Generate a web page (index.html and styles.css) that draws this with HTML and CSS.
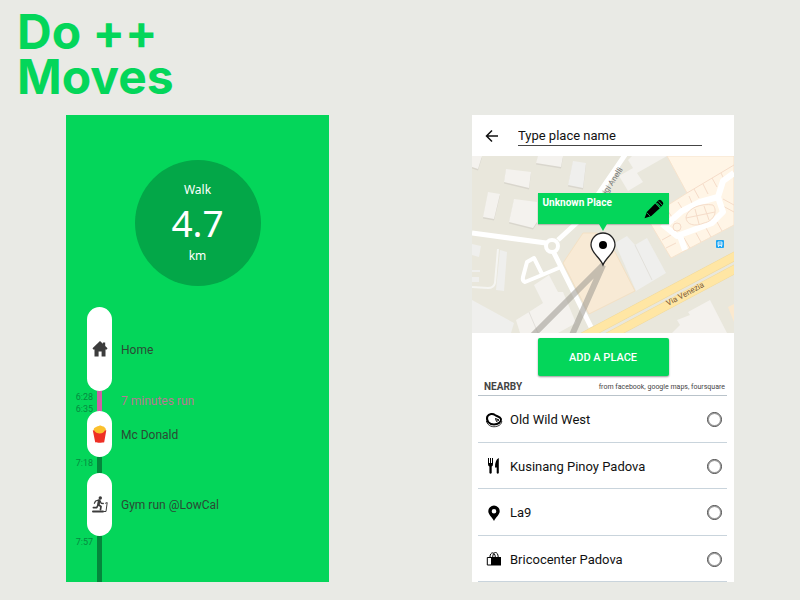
FILE: index.html
```html
<!DOCTYPE html>
<html lang="en">
<head>
    <meta charset="UTF-8">
    <meta name="viewport" content="width=device-width, initial-scale=1.0">
    <title>Do ++ Moves</title>
    <link rel="stylesheet" href="styles.css">
</head>
<body>
    <header class="title">
        <h1>Do ++<br>Moves</h1>
    </header>
    <main class="screens">
        <section class="moves">
            <div class="circle">
                <span class="unit">Walk</span>
                <span class="distance">4.7</span>
                <span class="unit">km</span>
            </div>
            <ol class="timeline">
                <li class="stop">
                    <span class="pill home">
                        <svg width="16" height="16" viewBox="0 0 16 16" fill="#3c3c3c"><path d="M8 0 0.5 7.3 1.3 8.6H2.5V15.5H6.6V10.5H9.6V15.5H13.5V8.6H14.8L15.5 7.3 13.2 5V1.4H10.9V2.8z"/></svg>
                    </span>
                    <span class="name">Home</span>
                </li>
                <li class="move run">
                    <span class="time"><time>6:28</time><time>6:35</time></span>
                    <span class="rail"></span>
                    <span class="name">7 minutes run</span>
                </li>
                <li class="stop">
                    <span class="pill food">
                        <svg width="16" height="18" viewBox="0 0 16 18"><path d="M2 6C1 3.5 2.6 2.4 4 2.2 5 .8 6.6 1.3 7.3.7 8.6.2 9.3 1.2 10.3 1.3 12 1.3 12.4 2.3 13.2 3 14.5 4.2 13.8 6 12.6 7.6 10 9.5 5 9.5 3 8z" fill="#fbc02d"/><path d="M.8 5.2 2.2 5.6C4 9.4 11.6 9.4 12.8 5.6L14.3 5.2 12.2 17.2C10 17.8 5.3 17.8 3.2 17.2z" fill="#ee2f25"/></svg>
                    </span>
                    <span class="name">Mc Donald</span>
                </li>
                <li class="move">
                    <span class="time"><time>7:18</time></span>
                    <span class="rail"></span>
                </li>
                <li class="stop">
                    <span class="pill gym">
                        <svg width="16" height="17" viewBox="0 0 16 17" fill="none" stroke="#3c3c3c" stroke-linecap="round" stroke-linejoin="round">
                            <circle cx="8.3" cy="2" r="1.7" fill="#3c3c3c" stroke="none"/>
                            <path d="M7.2 4.6 6.4 8.4" stroke-width="2.6"/>
                            <path d="M6.4 4.2 3.6 5 2.4 7.2M8.2 5.2 9.2 7.3 11.3 7.5" stroke-width="1.3"/>
                            <path d="M6.8 9 9 10.5 8.5 13.6M6 9.2 4.7 11.6 1.4 11.7" stroke-width="1.7"/>
                            <path d="M1 15.5H11" stroke-width="2"/>
                            <path d="M12 15.5H14L15.2 6.6 13.5 7.2" stroke-width="1"/>
                        </svg>
                    </span>
                    <span class="name">Gym run @LowCal</span>
                </li>
                <li class="move last">
                    <span class="time"><time>7:57</time></span>
                    <span class="rail"></span>
                </li>
            </ol>
        </section>

        <form class="places">
            <div class="topbar">
                <button type="button" class="back" aria-label="Back">
                    <svg width="14" height="14" viewBox="0 0 14 14" fill="none" stroke="#111" stroke-width="1.5"><path d="M13 7H1.8M7 1.5 1.5 7 7 12.5"/></svg>
                </button>
                <input type="text" class="place-name" name="place" value="Type place name" aria-label="Place name">
            </div>

            <div class="map">
                <svg class="map-image" viewBox="0 0 262 177" preserveAspectRatio="xMidYMid slice">
                    <rect width="262" height="177" fill="#e9e7dc"/>
                    <!-- buildings -->
                    <g fill="#d9d6cd" transform="translate(0 1.5)">
                        <path d="M0 0H10L6 13 0 11zM34 13 59 16 57 32 32 26zM66 0H91L89 11 64 7zM101 5 114 7 111 32 96 29zM16 36 28 38 22 63 11 61zM42 43 65 46V66L61 72 37 66z"/>
                    </g>
                    <g fill="#f4f2ee">
                        <path d="M0 0H10L6 13 0 11zM34 13 59 16 57 32 32 26zM66 0H91L89 11 64 7zM16 36 28 38 22 63 11 61zM42 43 65 46V66L61 72 37 66z"/>
                        <path d="M156 4 160 0H195L165 17 171 26 156 35 147 20 161 12z"/>
                        <path d="M62 129 77 119 86 136 91 136 104 167 86 177H48L44 164 57 156 71 147z"/>
                        <path d="M238 144 216 156 218 159 205 164 208 169 200 177H255z"/>
                    </g>
                    <g fill="#efefed">
                        <path d="M101 5 114 7 111 32 96 29zM28 94 35 96 32 135 24 134zM0 144 42 167 39 177H0zM0 88 9 90 7 101 0 99zM0 114H8V116H0zM0 121H7V126H0z"/>
                        <path d="M143 87 155 80 163 89 175 82 194 117 164 135z"/>
                    </g>
                    <path d="M57 156 66 177M163 89 180 124" fill="none" stroke="#e2e0da"/>
                    <path d="M26 93 23 127C22 131 20 132 16 132L0 131" fill="none" stroke="#f5f5f2" stroke-width="2"/>
                    <path d="M111 77 91 107 117 158 163 135 143 96 125 77z" fill="#f8ead5" stroke="#f3e0c4"/>
                    <!-- shopping centre -->
                    <path d="M195 0H262V69L199 102 178 67 196 49 215 37z" fill="#fff5e6" stroke="#f6e3cd"/>
                    <g fill="none" stroke="#f5dcc9">
                        <path d="M215 37 262 9M222 33 227 42M231 28 236 38M240 22 245 31M249 17 253 25M190 84 199 79M194 92 204 87M218 92 212 82M229 86 224 77M239 81 234 72M250 75 245 66M196 55 203 66M206 46 211 54M217 40 220 47M251 43 262 49M249 49 262 56"/>
                    </g>
                    <g fill="none" stroke="#fff" stroke-linejoin="round">
                        <path d="M262 17 251 25 246 41 228 46 210 55 194 69M246 41 251 56 240 67 216 76 205 80 190 68M208 80 213 94" stroke-width="6"/>
                    </g>
                    <path d="M214 61C216 52 229 47 241 49 246 55 242 65 232 67 223 71 214 69 214 61z" fill="#fff5e6" stroke="#f5dcc9"/>
                    <path d="M223 53 227 68M232 50 237 64M214 62 243 56" fill="none" stroke="#f5dcc9"/>
                    <circle cx="205" cy="71" r="4" fill="#fff5e6" stroke="#f5dcc9"/>
                    <path d="M256 151 262 148V166z" fill="#fbe9cf"/>
                    <!-- roads -->
                    <g fill="none" stroke="#fff" stroke-width="5" stroke-linejoin="round">
                        <path d="M0 77 74 87M86 84 110 62 155-4M82 97 119 171"/>
                        <path d="M89 111 70 119 53 126Q50 125 51 121L55 106 62 102 70 118" stroke-width="4"/>
                        <circle cx="80" cy="90" r="6" fill="#e9e7dc" stroke-width="4"/>
                    </g>
                    <g fill="none" stroke="#f0d99c" stroke-width="9">
                        <path d="M103 185 265 99M128 185 265 112"/>
                    </g>
                    <g fill="none" stroke="#ffe6a4" stroke-width="8">
                        <path d="M103 185 265 99M128 185 265 112"/>
                    </g>
                    <path d="M131 109 61 179M131 109 100 179" fill="none" stroke="#9b978f" stroke-opacity=".55" stroke-width="6"/>
                    <text class="street" transform="translate(130 46) rotate(-57)">Luigi Anelli</text>
                    <text class="avenue" transform="translate(196 150) rotate(-28)">Via Venezia</text>
                    <!-- bus stop -->
                    <rect x="244" y="84" width="8" height="8" rx="1" fill="#1da5f2"/>
                    <path d="M246 86H250V89.5H246zM246 88H250M246 90.5H247M249 90.5H250" fill="none" stroke="#fff" stroke-width=".8"/>
                    <!-- pin -->
                    <path d="M131 109C128 101 119 97 119 89A12 12 0 0 1 143 89C143 97 134 101 131 109z" fill="#fff" stroke="#222" stroke-width="1.3"/>
                    <circle cx="131" cy="89" r="4" fill="#000"/>
                </svg>
                <div class="callout">
                    <span>Unknown Place</span>
                    <button type="button" class="edit" aria-label="Edit">
                        <svg width="20" height="20" viewBox="0 0 20 20"><path d="M.5 19.3 3 12.8 11.2 4.6 15.8 9.2 7.3 17z" fill="#000"/><path d="M12 3.8 14.5 1.3Q16 .3 17.3 1.5L18.9 3.2Q19.8 4.5 18.8 5.8L16.5 8.4z" fill="#000"/><path d="M3 14 6 17M13 3.8 16.6 7.7M14.6 2.3 18 6" fill="none" stroke="#04d65a" stroke-width=".8"/></svg>
                    </button>
                </div>
            </div>

            <button type="button" class="add">ADD A PLACE</button>

            <div class="nearby">
                <h2>NEARBY</h2>
                <span class="sources">from facebook, google maps, foursquare</span>
            </div>
            <ul class="list">
                <li>
                    <label>
                        <svg class="icon" width="18" height="18" viewBox="0 0 18 18" fill="none" stroke="#000"><path d="M2.3 5.5C4 2.5 8 2.3 10 4 12 5.5 15 5.5 16 8 16.5 11 13 13.5 9 13.5 4 13.5 1 10 2.3 5.5z" stroke-width="2"/><path d="M1.3 10C3 15.5 8 16.5 12 15.3 15 14.5 16.8 12.5 16.8 10" stroke-width=".8"/><path d="M10.5 7.5 14 9 11.5 10.5z"/></svg>
                        <span>Old Wild West</span>
                        <input type="radio" name="nearby" value="1">
                    </label>
                </li>
                <li>
                    <label>
                        <svg class="icon" width="18" height="18" viewBox="0 0 18 18" fill="#000"><path d="M3 1H4V6H5V1H6V6H7V1H8V7Q8 9 6.7 9.5V16Q5.5 17.5 4.4 16V9.5Q3 9 3 7zM13.8 1V16Q12.8 17.5 11.7 16V10.5H10Q9.8 3 13.8 1z"/></svg>
                        <span>Kusinang Pinoy Padova</span>
                        <input type="radio" name="nearby" value="2">
                    </label>
                </li>
                <li>
                    <label>
                        <svg class="icon" width="18" height="18" viewBox="0 0 18 18" fill="#000" fill-rule="evenodd"><path d="M9 1.5A5.7 5.7 0 0 0 3.3 7.2C3.3 10.5 7 13 9 17 11 13 14.7 10.5 14.7 7.2A5.7 5.7 0 0 0 9 1.5zM9 4.9A2.3 2.3 0 1 1 9 9.5 2.3 2.3 0 0 1 9 4.9z"/></svg>
                        <span>La9</span>
                        <input type="radio" name="nearby" value="3">
                    </label>
                </li>
                <li>
                    <label>
                        <svg class="icon" width="18" height="18" viewBox="0 0 18 18"><path d="M6 7H16V15.5H6z" fill="#000"/><path d="M6 7.5H2.3V15H6M5 7C5 1.5 10 1.5 10.3 7M7.7 7C8 1 13 1 13.2 7" fill="none" stroke="#000"/></svg>
                        <span>Bricocenter Padova</span>
                        <input type="radio" name="nearby" value="4">
                    </label>
                </li>
            </ul>
        </form>
    </main>
</body>
</html>
```

FILE: styles.css
```css
* { box-sizing: border-box; }
body {
    margin: 0;
    min-height: 100vh;
    display: flex;
    flex-direction: column;
    padding-bottom: 18px;
    background-color: #e9eae5;
    font-family: Roboto, sans-serif;
    color: #111;
}
button {
    border: 0;
    padding: 0;
    background: none;
    font-family: inherit;
    cursor: pointer;
}
svg { display: block; }

.title { height: 115px; padding: 9px 17px; }
.title h1 {
    margin: 0;
    font-family: Inter, sans-serif;
    font-size: 48px;
    font-weight: bold;
    line-height: 45px;
    color: #04d65a;
}

.screens {
    flex: 1;
    display: grid;
    grid-template-columns: 263fr 262fr;
    gap: 143px;
    padding: 0 66px;
}

/* moves screen */
.moves {
    display: flex;
    flex-direction: column;
    padding-top: 45px;
    background-color: #04d65a;
}
.circle {
    width: 126px;
    height: 126px;
    margin: 0 auto 21px;
    border-radius: 50%;
    display: flex;
    flex-direction: column;
    align-items: center;
    justify-content: center;
    background-color: #03a748;
    color: #fff;
    font-family: "Noto Sans", sans-serif;
}
.unit { font-size: 12px; line-height: 16px; }
.distance { font-size: 37px; line-height: 50px; }

.timeline {
    flex: 1;
    display: flex;
    flex-direction: column;
    margin: 0;
    padding: 0;
    list-style: none;
    font-size: 12px;
    color: #2b4a35;
}
.stop {
    display: flex;
    align-items: center;
    gap: 9px;
    padding-left: 21px;
}
.stop .name { padding-top: 1px; }
.pill {
    width: 25px;
    border-radius: 13px;
    display: flex;
    align-items: center;
    justify-content: center;
    background-color: #fff;
}
.home { height: 84px; }
.food { height: 46px; }
.gym { height: 63px; }
.move {
    height: 16px;
    display: flex;
    gap: 4px;
}
.time {
    width: 27px;
    display: flex;
    flex-direction: column;
    text-align: right;
    font-size: 9px;
    line-height: 12px;
    color: #07893f;
}
.rail { width: 5px; background-color: #04873b; }
.move .name { padding-left: 15px; }
.run { height: 20px; line-height: 20px; color: #b87892; }
.run .rail { background-color: #d35fa6; }
.last { flex: 1; min-height: 46px; }

/* add place screen */
.places {
    display: flex;
    flex-direction: column;
    background-color: #fff;
}
.topbar {
    height: 41px;
    display: flex;
    align-items: center;
    gap: 19px;
    padding: 0 32px 0 13px;
}
.place-name {
    flex: 1;
    min-width: 0;
    height: 21px;
    padding: 0;
    border: 0;
    border-bottom: 1px solid #444;
    outline: none;
    background: none;
    font-family: inherit;
    font-size: 13px;
    color: #111;
}

.map { position: relative; }
.map-image { width: 100%; }
.street { font-size: 8px; fill: #777; }
.avenue { font-size: 8px; fill: #7a5a3a; }
.callout {
    position: absolute;
    top: 37px;
    left: 25%;
    width: 50%;
    height: 31px;
    padding: 4px 5px;
    display: flex;
    justify-content: space-between;
    background-color: #04d65a;
    box-shadow: 0 1px 1px #0003;
    font-size: 10px;
    font-weight: bold;
    line-height: 12px;
    color: #fff;
}
.callout::after {
    content: "";
    position: absolute;
    top: 100%;
    left: 50%;
    margin-left: -4px;
    border: 4px solid transparent;
    border-top: 7px solid #04d65a;
    border-bottom: 0;
}

.add {
    width: 50%;
    height: 38px;
    margin: 5px auto 0;
    border-radius: 2px;
    background-color: #04d65a;
    box-shadow: 0 1px 2px #0006;
    font-size: 11px;
    font-weight: 500;
    color: #fff;
}

.nearby {
    display: flex;
    align-items: center;
    justify-content: space-between;
    height: 20px;
    margin: 0 7px 0 6px;
    padding: 2px 2px 0 6px;
    border-bottom: 1px solid #b9c3ca;
    color: #444;
}
.nearby h2 { margin: 0; font-size: 10px; font-weight: bold; }
.sources { font-size: 7px; }

.list {
    flex: 1;
    display: flex;
    flex-direction: column;
    margin: 0 7px 0 6px;
    padding: 0;
    list-style: none;
    font-size: 13px;
}
.list li { flex: 1; display: flex; border-bottom: 1px solid #c9d4dc; }
.list label {
    flex: 1;
    display: flex;
    align-items: center;
    gap: 7px;
    min-height: 44px;
    padding: 2px 5px 0 7px;
}
.list input {
    appearance: none;
    width: 15px;
    height: 15px;
    margin: 0 0 0 auto;
    border: 1px solid #444;
    border-radius: 50%;
    box-shadow: inset 0 0 0 1px #4448;
}
.list input:checked { background-color: #04d65a; }
```
